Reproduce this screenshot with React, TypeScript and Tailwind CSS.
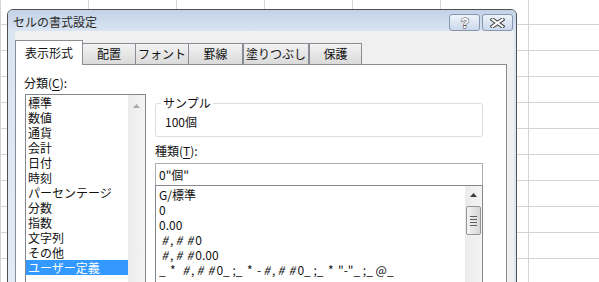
import React from 'react'

const categories = [
  '標準',
  '数値',
  '通貨',
  '会計',
  '日付',
  '時刻',
  'パーセンテージ',
  '分数',
  '指数',
  '文字列',
  'その他',
  'ユーザー定義',
]

const formats = ['G/標準', '0', '0.00', '#,##0', '#,##0.00', '_ * #,##0_ ;_ * -#,##0_ ;_ * "-"_ ;_ @_']

const tabs = [
  { label: '表示形式', cls: 'w-[68px]', active: true },
  { label: '配置', cls: 'w-[54px] -ml-px' },
  { label: 'フォント', cls: 'w-[54px] -ml-px' },
  { label: '罫線', cls: 'w-[55px] -ml-px' },
  { label: '塗りつぶし', cls: 'w-[66px]' },
  { label: '保護', cls: 'w-[53px]' },
]

function UpArrow({ color }: { color: string }) {
  return (
    <svg width="7" height="4" viewBox="0 0 7 4">
      <path d="M0 4 L3.5 0 L7 4 Z" fill={color} />
    </svg>
  )
}

// '#' is drawn wide in the original font, give it its own cell
function FormatText({ text }: { text: string }) {
  const parts = text.split(/([#*])/)
  return (
    <>
      {parts.map((p, i) =>
        p === '#' ? (
          <span key={i} className="inline-block w-[11px] text-center italic">
            #
          </span>
        ) : p === '*' ? (
          <span key={i} className="inline-block w-[9px] text-center">
            *
          </span>
        ) : (
          <span key={i}>{p}</span>
        )
      )}
    </>
  )
}

function TitleButton({ kind }: { kind: 'help' | 'close' }) {
  return (
    <div className="w-[31px] h-[17px] rounded-[3px] border border-[#8496b0] bg-gradient-to-b from-[#eef3fa] to-[#cbd9ea] flex items-center justify-center">
      {kind === 'help' ? (
        <svg width="12" height="13" viewBox="0 0 12 13">
          <text
            x="6"
            y="11.5"
            textAnchor="middle"
            fontSize="14"
            fontWeight="bold"
            fontFamily="Liberation Sans, sans-serif"
            fill="#ffffff"
            stroke="#4a4a4a"
            strokeWidth="1"
            paintOrder="stroke"
          >
            ?
          </text>
        </svg>
      ) : (
        <svg width="15" height="10" viewBox="0 0 15 10">
          <path d="M2.5 1.5 L12.5 8.5 M12.5 1.5 L2.5 8.5" stroke="#4a4a4a" strokeWidth="4" strokeLinecap="square" />
          <path d="M2.5 1.5 L12.5 8.5 M12.5 1.5 L2.5 8.5" stroke="#ffffff" strokeWidth="2" strokeLinecap="square" />
        </svg>
      )}
    </div>
  )
}

export default function App() {
  return (
    <div className="relative w-[599px] h-[282px] overflow-hidden bg-white bg-[linear-gradient(to_right,#d4d4d4_1px,transparent_1px),linear-gradient(to_bottom,#d4d4d4_1px,transparent_1px)] bg-[size:88px_26px] bg-[position:0px_24px] font-['Noto_Sans_CJK_JP',sans-serif] text-[12px] text-[#111]">
      {/* Dialog window */}
      <div className="absolute left-[7px] top-[9px] w-[510px] h-[290px] border border-[#505050] rounded-t-[6px] flex flex-col bg-[#dbe6f3] overflow-hidden">
        {/* Title bar */}
        <div className="h-[23px] flex items-start justify-between bg-gradient-to-b from-[#c2d2e6] to-[#dae5f2] pl-[5px] pr-[3px]">
          <span className="leading-[16px] mt-[4px] text-[#2a2a2a]">セルの書式設定</span>
          <div className="flex gap-[2px] mt-[4px]">
            <TitleButton kind="help" />
            <TitleButton kind="close" />
          </div>
        </div>

        {/* Body */}
        <div className="flex flex-1">
          <div className="w-[7px] bg-gradient-to-b from-[#dae5f2] to-[#e4ecf6]" />
          <div className="flex-1 bg-[#f0f0f0] pt-[9px] pr-[7px] flex flex-col">
            {/* Tabs */}
            <div className="flex items-end h-[24px]">
              {tabs.map((t) =>
                t.active ? (
                  <div
                    key={t.label}
                    className={`${t.cls} relative z-10 h-[25px] -mb-px bg-white border border-b-0 border-[#898c95] flex items-center justify-center leading-[16px]`}
                  >
                    {t.label}
                  </div>
                ) : (
                  <div
                    key={t.label}
                    className={`${t.cls} h-[21px] bg-gradient-to-b from-[#f3f3f3] to-[#dadada] border border-b-0 border-[#898c95] flex items-center justify-center leading-[16px]`}
                  >
                    {t.label}
                  </div>
                )
              )}
            </div>

            {/* Tab panel */}
            <div className="flex-1 bg-white border border-[#898c95] flex pt-[10px] pl-[9px]">
              {/* Category column */}
              <div className="w-[121px] flex flex-col">
                <div className="leading-[16px] -ml-px">
                  分類(<span className="underline underline-offset-2">C</span>):
                </div>
                <div className="mt-[3px] h-[200px] border border-[#828790] flex">
                  <div className="w-[102px] flex flex-col">
                    {categories.map((c, i) => (
                      <div
                        key={c}
                        className={`h-[15px] leading-[15px] pl-[2px] whitespace-nowrap ${
                          i === categories.length - 1 ? 'bg-[#3399ff] text-white' : ''
                        }`}
                      >
                        {c}
                      </div>
                    ))}
                  </div>
                  <div className="flex-1 bg-gradient-to-r from-[#ebebeb] to-[#f4f4f4] flex flex-col items-center pt-[9px]">
                    <UpArrow color="#a9a9a9" />
                  </div>
                </div>
              </div>

              {/* Type column */}
              <div className="ml-[9px] w-[328px] mt-[20px] flex flex-col">
                <fieldset className="h-[42px] border border-[#d5dfe5] rounded-[3px]">
                  <legend className="ml-[5px] px-[2px] leading-[16px]">サンプル</legend>
                  <div className="pl-[9px] leading-[16px] mt-[3px]">100個</div>
                </fieldset>
                <div className="mt-[6px] leading-[16px]">
                  種類(<span className="underline underline-offset-2">T</span>):
                </div>
                <div className="mt-[4px] h-[22px] border border-b-0 border-[#abadb3] flex items-center pl-[3px] leading-[16px]">
                  0"個"
                </div>
                <div className="h-[120px] border border-[#828790] flex">
                  <div className="flex-1 flex flex-col pt-px pl-[3px]">
                    {formats.map((f) => (
                      <div key={f} className="h-[15px] leading-[15px] whitespace-pre">
                        <FormatText text={f} />
                      </div>
                    ))}
                  </div>
                  <div className="w-[17px] bg-gradient-to-r from-[#ebebeb] to-[#f4f4f4] flex flex-col items-center">
                    <div className="h-[17px] flex items-center justify-center">
                      <UpArrow color="#3c3c3c" />
                    </div>
                    <div className="mt-[3px] w-[15px] h-[29px] rounded-[2px] border border-[#959595] bg-gradient-to-r from-[#f4f4f4] to-[#d6d6d6] flex flex-col items-center justify-center gap-[2px]">
                      <div className="w-[7px] h-px bg-[#5e5e5e]" />
                      <div className="w-[7px] h-px bg-[#5e5e5e]" />
                      <div className="w-[7px] h-px bg-[#5e5e5e]" />
                      <div className="w-[7px] h-px bg-[#5e5e5e]" />
                    </div>
                  </div>
                </div>
              </div>
            </div>
          </div>
          <div className="w-[2px] bg-[#dbe6f3]" />
        </div>
      </div>
    </div>
  )
}
